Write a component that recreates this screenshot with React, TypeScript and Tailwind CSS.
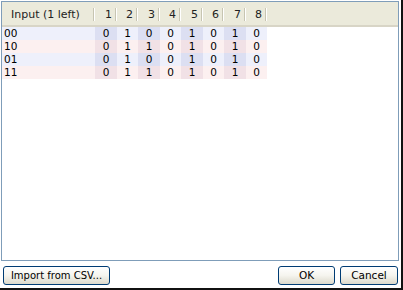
const rows = [
  { input: '00', bits: [0, 1, 0, 0, 1, 0, 1, 0] },
  { input: '10', bits: [0, 1, 1, 0, 1, 0, 1, 0] },
  { input: '01', bits: [0, 1, 0, 0, 1, 0, 1, 0] },
  { input: '11', bits: [0, 1, 1, 0, 1, 0, 1, 0] },
]

const colWidths = ['w-[22px]', 'w-[21px]', 'w-[22px]', 'w-[21px]', 'w-[22px]', 'w-[21px]', 'w-[22px]', 'w-[21px]']

function HeaderCell({ label, width, align }: { label: string; width: string; align: string }) {
  return (
    <div className={`relative flex h-full items-center pt-[3px] ${width} ${align}`}>
      <span>{label}</span>
      <div className="absolute right-0 top-[6px] bottom-[4px] flex">
        <div className="w-px bg-[#c7c5b2]" />
        <div className="w-px bg-white" />
      </div>
    </div>
  )
}

function XpButton({ label, className }: { label: string; className: string }) {
  return (
    <button
      className={`flex h-[19px] items-center justify-center whitespace-nowrap rounded-[3px] border border-[#003c74] bg-gradient-to-b from-white via-[#f5f4ee] to-[#dcd9cb] text-black ${className}`}
    >
      {label}
    </button>
  )
}

export default function App() {
  return (
    <div
      className="flex h-[290px] w-[403px] flex-col border-b-2 border-r-2 border-[#111] bg-white text-[10.5px] text-black"
      style={{ fontFamily: '"DejaVu Sans", Verdana, sans-serif' }}
    >
      <div className="ml-[1px] mt-[1px] h-[260px] w-[398px] border border-[#7f9db9] bg-white">
        <div className="flex h-[25px] border-b-2 border-[#d8d5c6] bg-[#ebeadb] text-[11px] text-[#222]">
          <HeaderCell label="Input (1 left)" width="w-[93px]" align="justify-start pl-[9px]" />
          {colWidths.map((w, i) => (
            <HeaderCell key={i} label={String(i + 1)} width={w} align="justify-end pr-[5px]" />
          ))}
        </div>
        {rows.map((row, r) => {
          const blue = r % 2 === 0
          return (
            <div key={r} className="flex h-[13px] items-center leading-[13px]">
              <div className={`h-full w-[93px] pl-[2px] ${blue ? 'bg-[#eef0fb]' : 'bg-[#fcf0f0]'}`}>{row.input}</div>
              {row.bits.map((b, i) => {
                const dark = i % 2 === 0
                const bg = blue
                  ? dark ? 'bg-[#dcdff2]' : 'bg-[#eef0fb]'
                  : dark ? 'bg-[#f1e1e6]' : 'bg-[#fcf0f0]'
                return (
                  <div key={i} className={`flex h-full justify-center ${colWidths[i]} ${bg}`}>
                    {b}
                  </div>
                )
              })}
            </div>
          )
        })}
      </div>
      <div className="mt-[5px] flex items-center px-[3px] text-[10px]">
        <XpButton label="Import from CSV..." className="w-[107px]" />
        <div className="flex-1" />
        <XpButton label="OK" className="w-[57px] text-[10.5px]" />
        <XpButton label="Cancel" className="ml-[5px] w-[58px] text-[10.5px]" />
      </div>
    </div>
  )
}
